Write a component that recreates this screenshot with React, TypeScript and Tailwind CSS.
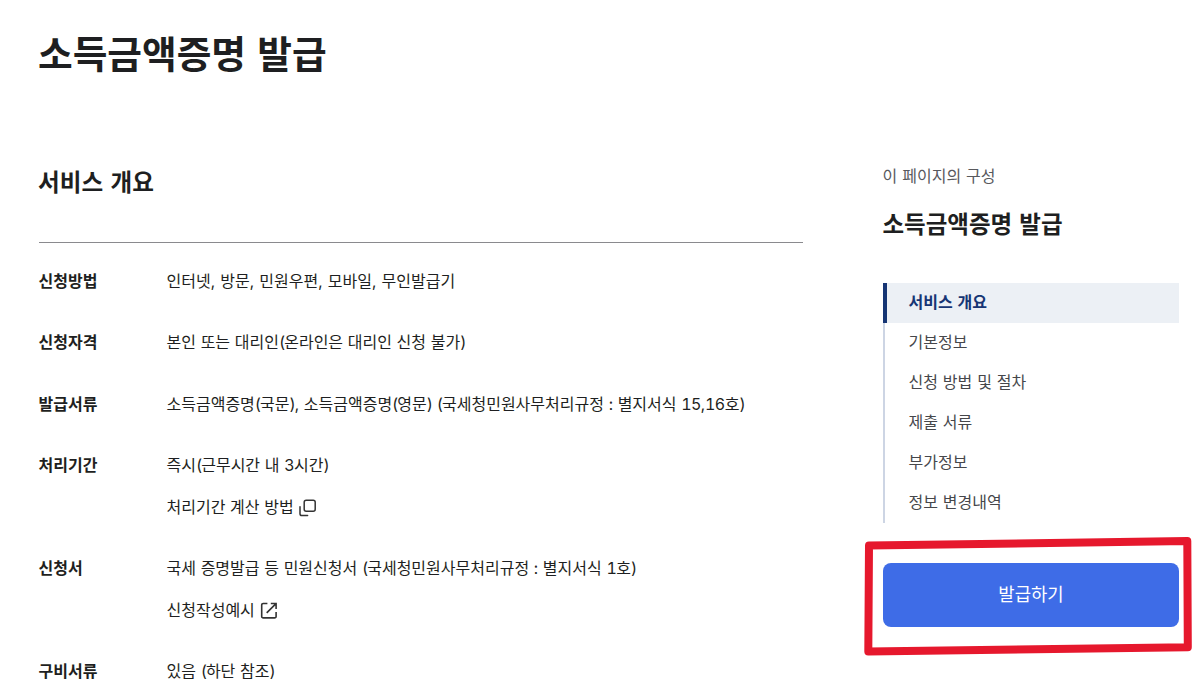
import type { ReactNode } from 'react';

const navItems = ['서비스 개요', '기본정보', '신청 방법 및 절차', '제출 서류', '부가정보', '정보 변경내역'];

function PopupIcon() {
  return (
    <svg width="18" height="18" viewBox="0 0 18 18" fill="none" stroke="#333" strokeWidth="1.5" strokeLinecap="round">
      <rect x="5.2" y="1.2" width="11" height="11" rx="2" />
      <path d="M1 7.7v7a1.8 1.8 0 0 0 1.8 1.8h5.8" />
    </svg>
  );
}

function LinkIcon() {
  return (
    <svg width="18" height="18" viewBox="0 0 18 18" fill="none" stroke="#333" strokeWidth="1.6">
      <path d="M7.4 1.5H3.2a1.5 1.5 0 0 0-1.5 1.5v11.4a1.5 1.5 0 0 0 1.5 1.5h11.4a1.5 1.5 0 0 0 1.5-1.5v-4.3" />
      <path d="M10.8 1.5h5.3v5.4M16 1.6 6.7 10.9" />
    </svg>
  );
}

// parentheses and digits are set a little tighter than the rest of the line
function Text({ children }: { children: string }) {
  return (
    <p>
      {children.split(/([()]|\d+)/).map((part, i) => {
        if (part === '(' || part === ')') {
          return <span key={i} className="tracking-[-1px]">{part}</span>;
        }
        if (/^\d+$/.test(part)) {
          return <span key={i} className="tracking-[-0.6px]">{part}</span>;
        }
        return part;
      })}
    </p>
  );
}

function Row({ label, children }: { label: string; children: ReactNode }) {
  return (
    <div className="flex">
      <dt className="w-32 shrink-0 font-bold">{label}</dt>
      <dd className="flex flex-col gap-[16.5px] whitespace-nowrap tabular-nums [word-spacing:0.4px]">{children}</dd>
    </div>
  );
}

export default function App() {
  return (
    <div className="h-[686px] w-[1199px] overflow-hidden bg-white pl-[38.5px] font-['Inter','Noto_Sans_CJK_KR',sans-serif] text-base leading-[25.5px] text-[#1e1f21]">
      <h1 className="-ml-[0.5px] pt-[24px] text-[37.7px] font-bold leading-[60px] [word-spacing:2.4px]">소득금액증명 발급</h1>

      <div className="mt-[79px] flex">
        <main className="w-[764.5px]">
          <h2 className="-ml-[0.5px] pt-px text-[23.6px] font-bold leading-[38px] [word-spacing:1.8px]">서비스 개요</h2>
          <hr className="ml-[0.5px] mt-10 border-[#8a8a8e]" />
          <dl className="mt-[26px] flex flex-col gap-[35.8px]">
            <Row label="신청방법">
              <p className="[word-spacing:1px]">인터넷, 방문, 민원우편, 모바일, 무인발급기</p>
            </Row>
            <Row label="신청자격">
              <Text>본인 또는 대리인(온라인은 대리인 신청 불가)</Text>
            </Row>
            <Row label="발급서류">
              <Text>소득금액증명(국문), 소득금액증명(영문) (국세청민원사무처리규정 : 별지서식 15,16호)</Text>
            </Row>
            <Row label="처리기간">
              <Text>즉시(근무시간 내 3시간)</Text>
              <a className="flex items-center gap-[5px]">
                처리기간 계산 방법 <PopupIcon />
              </a>
            </Row>
            <Row label="신청서">
              <Text>국세 증명발급 등 민원신청서 (국세청민원사무처리규정 : 별지서식 1호)</Text>
              <a className="flex items-center gap-[5px]">
                신청작성예시 <LinkIcon />
              </a>
            </Row>
            <Row label="구비서류">
              <Text>있음 (하단 참조)</Text>
            </Row>
          </dl>
        </main>

        <aside className="ml-20 w-[296px]">
          <p className="-ml-[0.5px] pt-px text-[#58595d] [word-spacing:0.5px]">이 페이지의 구성</p>
          <h3 className="-ml-[0.5px] mt-[16px] text-[23.5px] font-bold leading-[38px] [word-spacing:1.5px]">소득금액증명 발급</h3>
          <ul className="mt-[39.5px] [word-spacing:0.4px]">
            {navItems.map((item, i) => (
              <li
                key={item}
                className={
                  i === 0
                    ? 'h-10 border-l-4 border-[#163574] bg-[#ecf0f5] pl-[21.5px] font-bold leading-[39px] text-[#163574] [word-spacing:1px]'
                    : 'h-10 border-l-2 border-[#cdd5e4] pl-[23.5px] leading-[39px] text-[#46474b]'
                }
              >
                {item}
              </li>
            ))}
          </ul>
          <div className="relative mt-10">
            <button className="h-16 w-full rounded-lg bg-[#3e6ce7] text-[17.8px] text-white">발급하기</button>
            <svg
              className="pointer-events-none absolute -left-[19px] -top-[27px]"
              width="330"
              height="122"
              viewBox="864 536 330 122"
              fill="none"
            >
              <path d="M869 545.5 1187.3 541 1187.8 647.3 868.3 651.4Z" stroke="#e6182d" strokeWidth="8" strokeLinejoin="round" />
            </svg>
          </div>
        </aside>
      </div>
    </div>
  );
}
